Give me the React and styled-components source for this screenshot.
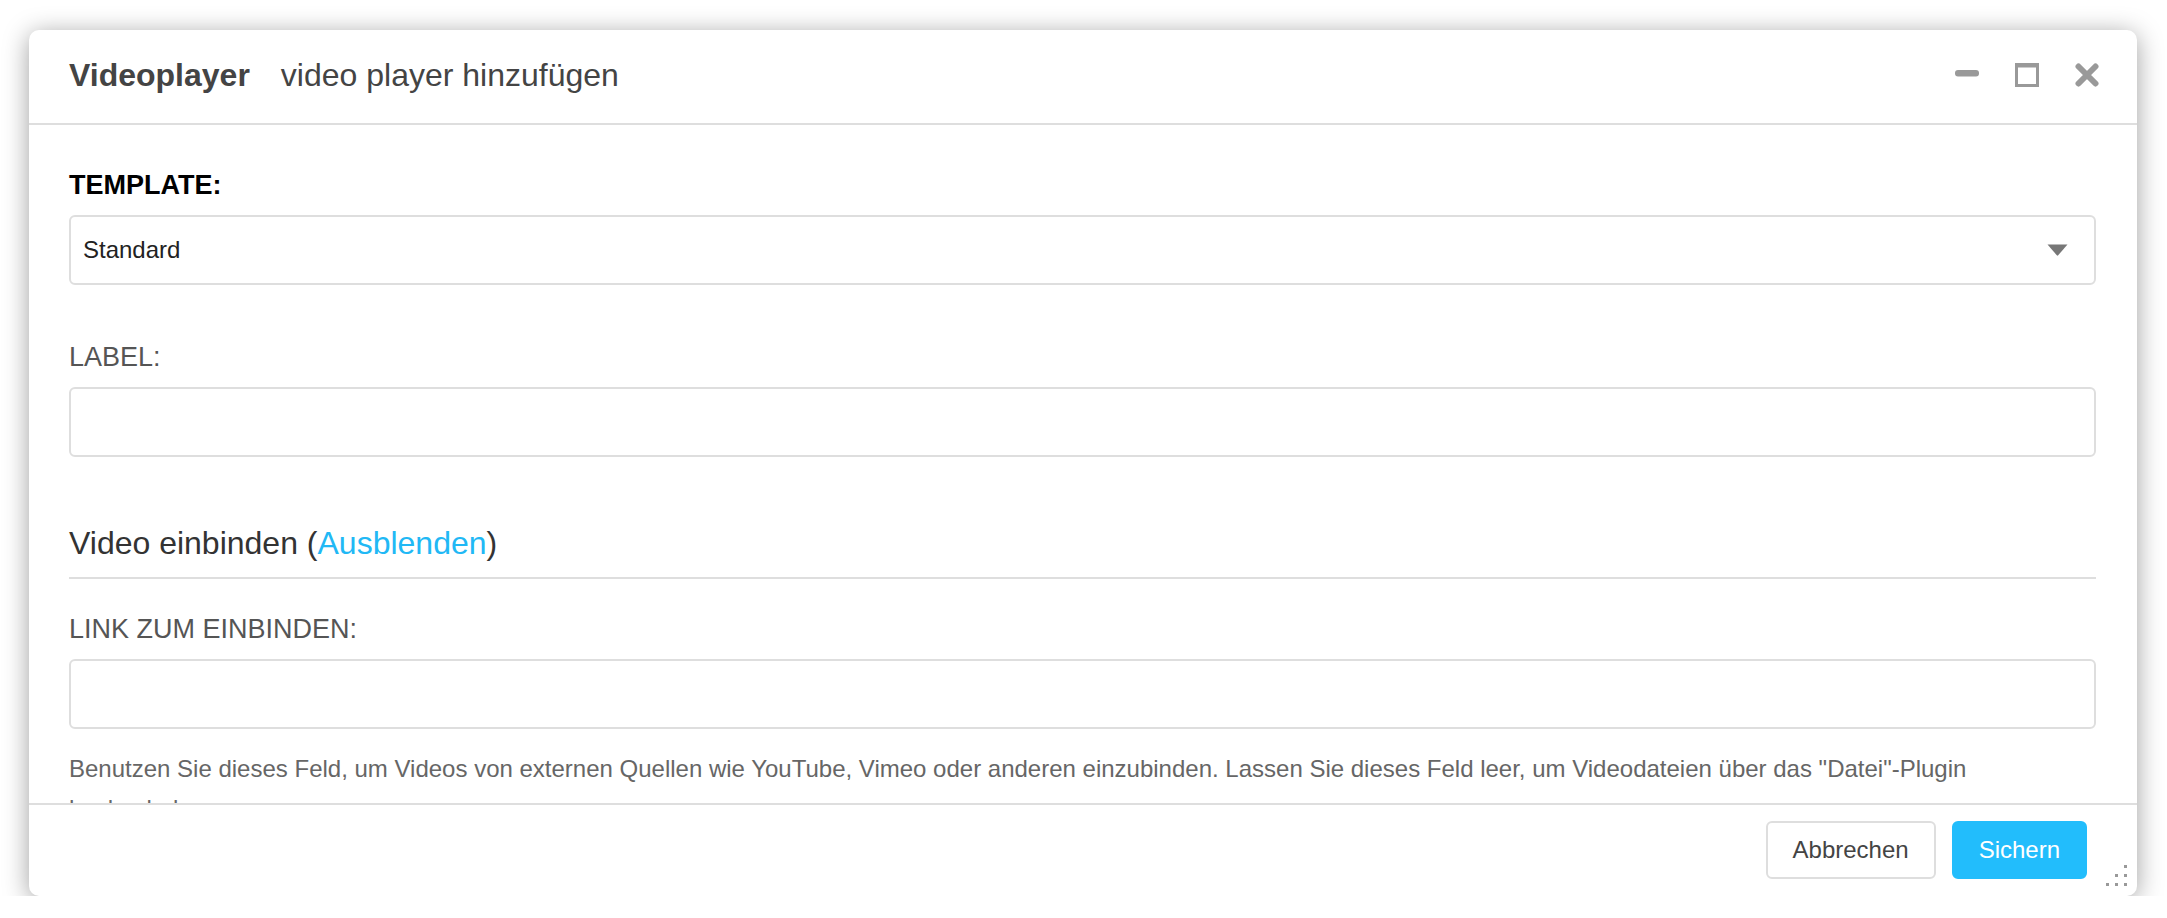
import React from "react";
import styled, { createGlobalStyle } from "styled-components";

const colors = {
  border: "#dedede",
  icon: "#999",
  text: "#444",
  muted: "#666",
  link: "#21b8f5",
  primary: "#22bdfc"
};

const GlobalStyle = createGlobalStyle`
  html, body {
    margin: 0;
    padding: 0;
    background: #fff;
    font-family: "Liberation Sans", Arial, sans-serif;
  }
  * {
    box-sizing: border-box;
  }
`;

const Dialog = styled.div`
  position: relative;
  display: flex;
  flex-direction: column;
  width: 2108px;
  height: 866px;
  margin: 30px 0 0 29px;
  background: #fff;
  border-radius: 10px;
  box-shadow: 0 4px 26px rgba(0, 0, 0, 0.38);
  overflow: hidden;
`;

const Header = styled.header`
  display: flex;
  align-items: center;
  padding: 25px 38px 28px 40px;
  border-bottom: 2px solid ${colors.border};
  line-height: 40px;
  font-size: 32px;
  color: ${colors.text};
`;

const Title = styled.h1`
  margin: 0;
  font-size: 32px;
  font-weight: bold;
`;

const Subtitle = styled.span`
  margin-left: 31px;
`;

const Controls = styled.div`
  display: flex;
  align-items: center;
  gap: 36px;
  margin-left: auto;
`;

const IconButton = styled.button`
  display: flex;
  width: 24px;
  height: 24px;
  padding: 0;
  border: 0;
  background: none;
  cursor: pointer;
`;

const Body = styled.div`
  flex: 1;
  overflow: hidden;
  padding: 42px 41px 0 40px;
`;

const FieldLabel = styled.label`
  display: block;
  margin-bottom: 12px;
  font-size: 27px;
  line-height: 36px;
  font-weight: ${(p) => (p.$strong ? "bold" : "normal")};
  color: ${(p) => (p.$strong ? "#000" : "#555")};
`;

const Field = styled.div`
  margin-bottom: ${(p) => p.$gap || 0}px;
`;

const SelectBox = styled.div`
  display: flex;
  align-items: center;
  justify-content: space-between;
  height: 70px;
  padding: 0 26px 0 12px;
  border: 2px solid ${colors.border};
  border-radius: 6px;
  font-size: 24px;
  color: #222;
`;

const TextInput = styled.input`
  display: block;
  width: 100%;
  height: 70px;
  padding: 0 12px;
  border: 2px solid ${colors.border};
  border-radius: 6px;
  font-family: inherit;
  font-size: 24px;
  outline: none;
`;

const SectionTitle = styled.h2`
  margin: 0 0 32px;
  padding-bottom: 14px;
  border-bottom: 2px solid ${colors.border};
  font-size: 32px;
  line-height: 40px;
  font-weight: normal;
  color: #333;
`;

const Link = styled.a`
  color: ${colors.link};
  text-decoration: none;
  cursor: pointer;
`;

const HelpText = styled.p`
  margin: 20px 0 0;
  font-size: 24px;
  line-height: 40px;
  color: ${colors.muted};
`;

const Footer = styled.footer`
  display: flex;
  justify-content: flex-end;
  gap: 16px;
  padding: 16px 50px 17px;
  border-top: 2px solid ${colors.border};
`;

const Button = styled.button`
  height: 58px;
  padding: 0 25px;
  border: 2px solid ${(p) => (p.$primary ? colors.primary : colors.border)};
  border-radius: 6px;
  background: ${(p) => (p.$primary ? colors.primary : "#fff")};
  color: ${(p) => (p.$primary ? "#fff" : colors.text)};
  font-family: inherit;
  font-size: 24px;
  cursor: pointer;
`;

const Grip = styled.svg`
  position: absolute;
  right: 10px;
  bottom: 10px;
`;

const MinimizeIcon = () => (
  <svg width="24" height="24" viewBox="0 0 24 24">
    <rect x="0" y="7" width="24" height="6.5" rx="3" fill={colors.icon} />
  </svg>
);

const MaximizeIcon = () => (
  <svg width="24" height="24" viewBox="0 0 24 24">
    <path
      fillRule="evenodd"
      d="M0 0H24V24H0Z M3 4.5H21V21H3Z"
      fill={colors.icon}
    />
  </svg>
);

const CloseIcon = () => (
  <svg width="24" height="24" viewBox="0 0 24 24">
    <path
      d="M3.5 3.5L20.5 20.5M20.5 3.5L3.5 20.5"
      stroke={colors.icon}
      strokeWidth="6"
      strokeLinecap="round"
    />
  </svg>
);

const Caret = () => (
  <svg width="21" height="12" viewBox="0 0 21 12">
    <path d="M0.5 0.5H20.5L11.2 11.3Q10.5 12 9.8 11.3Z" fill="#777" />
  </svg>
);

const dots = [
  [18, 0],
  [9, 9],
  [18, 9],
  [0, 18],
  [9, 18],
  [18, 18]
];

const App = () => (
  <>
    <GlobalStyle />
    <Dialog>
      <Header>
        <Title>Videoplayer</Title>
        <Subtitle>video player hinzufügen</Subtitle>
        <Controls>
          <IconButton aria-label="Minimieren">
            <MinimizeIcon />
          </IconButton>
          <IconButton aria-label="Maximieren">
            <MaximizeIcon />
          </IconButton>
          <IconButton aria-label="Schließen">
            <CloseIcon />
          </IconButton>
        </Controls>
      </Header>

      <Body>
        <Field $gap={54}>
          <FieldLabel $strong>TEMPLATE:</FieldLabel>
          <SelectBox>
            <span>Standard</span>
            <Caret />
          </SelectBox>
        </Field>

        <Field $gap={66}>
          <FieldLabel>LABEL:</FieldLabel>
          <TextInput type="text" />
        </Field>

        <SectionTitle>
          Video einbinden (<Link>Ausblenden</Link>)
        </SectionTitle>

        <Field>
          <FieldLabel>LINK ZUM EINBINDEN:</FieldLabel>
          <TextInput type="text" />
        </Field>
        <HelpText>
          Benutzen Sie dieses Feld, um Videos von externen Quellen wie YouTube,
          Vimeo oder anderen einzubinden. Lassen Sie dieses Feld leer, um
          Videodateien über das "Datei"-Plugin hochzuladen.
        </HelpText>
      </Body>

      <Footer>
        <Button>Abbrechen</Button>
        <Button $primary>Sichern</Button>
      </Footer>

      <Grip width="21" height="21" viewBox="0 0 21 21">
        {dots.map(([x, y]) => (
          <rect key={`${x}-${y}`} x={x} y={y} width="3" height="3" fill="#999" />
        ))}
      </Grip>
    </Dialog>
  </>
);

export default App;
